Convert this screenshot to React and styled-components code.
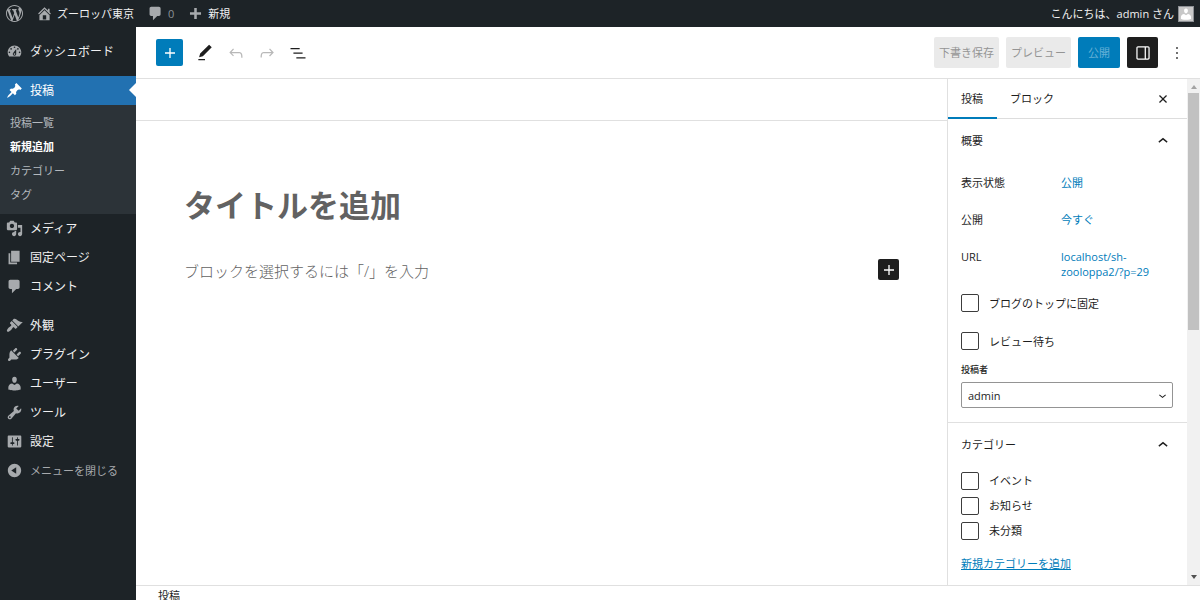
import React from "react";
import styled, { createGlobalStyle } from "styled-components";

const GlobalStyle = createGlobalStyle`
  * {
    box-sizing: border-box;
  }

  body {
    margin: 0;
    font-family: "Open Sans", "Noto Sans CJK JP", sans-serif;
    font-size: 11px;
    line-height: 15px;
    color: #1e1e1e;
    background: #fff;
  }

  button, input, select {
    font: inherit;
    color: inherit;
    margin: 0;
  }

  button {
    border: 0;
    padding: 0;
    background: none;
    cursor: pointer;
  }

  a {
    text-decoration: none;
  }
`;

// 20x20 admin glyphs
const adminIcons = {
  wordpress: "M20 10c0-5.51-4.49-10-10-10C4.48 0 0 4.49 0 10c0 5.52 4.48 10 10 10 5.51 0 10-4.48 10-10zM7.78 15.37L4.37 6.22c.55-.02 1.17-.08 1.17-.08.5-.06.44-1.13-.06-1.11 0 0-1.45.11-2.37.11-.18 0-.37 0-.58-.01C4.12 2.69 6.87 1.11 10 1.11c2.33 0 4.45.87 6.05 2.34-.68-.11-1.65.39-1.65 1.58 0 .74.45 1.36.9 2.1.35.61.55 1.36.55 2.46 0 1.49-1.4 5-1.4 5l-3.03-8.37c.54-.02.82-.17.82-.17.5-.05.44-1.25-.06-1.22 0 0-1.44.12-2.38.12-.87 0-2.33-.12-2.33-.12-.5-.03-.56 1.2-.06 1.22l.92.08 1.26 3.41zM17.41 10c.24-.64.74-1.87.43-4.25.7 1.29 1.05 2.71 1.05 4.25 0 3.29-1.73 6.24-4.4 7.78.97-2.59 1.94-5.2 2.92-7.78zM6.1 18.09C3.12 16.65 1.11 13.53 1.11 10c0-1.3.23-2.48.72-3.59C3.25 10.3 4.67 14.2 6.1 18.09zm4.03-6.63l2.58 6.98c-.86.29-1.76.45-2.71.45-.79 0-1.57-.11-2.29-.33.81-2.38 1.62-4.74 2.42-7.1z",
  home: "M16 8.5l1.53 1.53-1.06 1.06L10 4.6l-6.47 6.49-1.06-1.06L10 2.5l4 4v-2h2v4zm-6-2.46l6 5.99V18H4v-5.97zM12 17v-5H8v5h4z",
  comments: "M5 2h9c1.1 0 2 .9 2 2v7c0 1.1-.9 2-2 2h-2l-5 5v-5H5c-1.1 0-2-.9-2-2V4c0-1.1.9-2 2-2z",
  plus: "M16.5 8.5v3h-5v5h-3v-5h-5v-3h5v-5h3v5z",
  dashboard: "M3.76 16h12.48c1.1-1.37 1.76-3.11 1.76-5 0-4.42-3.58-8-8-8s-8 3.58-8 8c0 1.89.66 3.63 1.76 5zM10 4c.55 0 1 .45 1 1s-.45 1-1 1-1-.45-1-1 .45-1 1-1zM6 6c.55 0 1 .45 1 1s-.45 1-1 1-1-.45-1-1 .45-1 1-1zm8 0c.55 0 1 .45 1 1s-.45 1-1 1-1-.45-1-1 .45-1 1-1zm-5.37 5.55L12 7v6c0 1.1-.9 2-2 2s-2-.9-2-2c0-.57.24-1.08.63-1.45zM4 10c.55 0 1 .45 1 1s-.45 1-1 1-1-.45-1-1 .45-1 1-1zm12 0c.55 0 1 .45 1 1s-.45 1-1 1-1-.45-1-1 .45-1 1-1zm-5 3c0-.55-.45-1-1-1s-1 .45-1 1 .45 1 1 1 1-.45 1-1z",
  post: "M10.44 3.02l1.82-1.82 6.36 6.35-1.83 1.82c-1.05-.68-2.48-.57-3.41.36l-.75.75c-.92.93-1.04 2.35-.35 3.41l-1.83 1.82-2.41-2.41-2.8 2.79c-.42.42-3.38 2.71-3.8 2.29s1.86-3.39 2.28-3.81l2.79-2.79L4.1 9.36l1.83-1.82c1.05.69 2.48.57 3.4-.36l.75-.75c.93-.92 1.05-2.35.36-3.41z",
  media: "M13 11V4c0-.55-.45-1-1-1h-1.67L9 1H5L3.67 3H2c-.55 0-1 .45-1 1v7c0 .55.45 1 1 1h10c.55 0 1-.45 1-1zM7 4.5c1.38 0 2.5 1.12 2.5 2.5S8.38 9.5 7 9.5 4.5 8.38 4.5 7 5.62 4.5 7 4.5zM14 6h5v10.5c0 1.38-1.12 2.5-2.5 2.5S14 17.88 14 16.5s1.12-2.5 2.5-2.5c.17 0 .34.02.5.05V9h-3V6zm-4 8.05V13h2v3.5c0 1.38-1.12 2.5-2.5 2.5S7 17.88 7 16.5 8.12 14 9.5 14c.17 0 .34.02.5.05z",
  page: "M6 15V2h10v13H6zm-1 1h8v2H3V5h2v11z",
  appearance: "M14.48 11.06L7.41 3.99l1.5-1.5c.5-.56 2.3-.47 3.51.32 1.21.8 1.43 1.28 2.91 2.1 1.18.64 2.45 1.26 4.45.85zm-.71.71L6.7 4.7 4.93 6.47c-.39.39-.39 1.02 0 1.41l1.06 1.06c.39.39.39 1.03 0 1.42-.6.6-1.43 1.11-2.21 1.69-.35.26-.7.53-1.01.84C1.43 14.23.4 16.08 1.4 17.07c.99 1 2.84-.03 4.18-1.36.31-.31.58-.66.85-1.02.57-.78 1.08-1.61 1.69-2.21.39-.39 1.02-.39 1.41 0l1.06 1.06c.39.39 1.02.39 1.41 0z",
  plugins: "M13.11 4.36L9.87 7.6 8 5.73l3.24-3.24c.35-.34 1.05-.2 1.56.32.52.51.66 1.21.31 1.55zm-8 1.77l.91-1.12 9.01 9.01-1.19.84c-.71.71-2.63 1.16-3.82 1.16H6.14L4.9 17.26c-.59.59-1.54.59-2.12 0-.59-.58-.59-1.53 0-2.12l1.24-1.24v-3.88c0-1.13.4-3.19 1.09-3.89zm7.26 3.97l3.24-3.24c.34-.35 1.04-.21 1.55.31.52.51.66 1.21.31 1.55l-3.24 3.25z",
  users: "M10 9.25c-2.27 0-2.73-3.44-2.73-3.44C7 4.02 7.82 2 9.97 2c2.16 0 2.98 2.02 2.71 3.81 0 0-.41 3.44-2.68 3.44zm0 2.57L12.72 10c2.39 0 4.52 2.33 4.52 4.53v2.49s-3.65 1.13-7.24 1.13c-3.65 0-7.24-1.13-7.24-1.13v-2.49c0-2.25 1.94-4.48 4.47-4.48z",
  tools: "M16.68 9.77c-1.34 1.34-3.3 1.67-4.95.99l-5.41 6.52c-.99.99-2.59.99-3.58 0s-.99-2.59 0-3.57l6.52-5.42c-.68-1.65-.35-3.61.99-4.95 1.28-1.28 3.12-1.62 4.72-1.06l-2.89 2.89 2.82 2.82 2.86-2.87c.53 1.58.18 3.39-1.08 4.65zM3.81 16.21c.4.39 1.04.39 1.43 0 .4-.4.4-1.04 0-1.43-.39-.4-1.03-.4-1.43 0-.39.39-.39 1.03 0 1.43z",
  settings: "M18 16V4c0-.55-.45-1-1-1H3c-.55 0-1 .45-1 1v12c0 .55.45 1 1 1h14c.55 0 1-.45 1-1zM8 11h1c.55 0 1 .45 1 1s-.45 1-1 1H8v1.5c0 .28-.22.5-.5.5s-.5-.22-.5-.5V13H6c-.55 0-1-.45-1-1s.45-1 1-1h1V5.5c0-.28.22-.5.5-.5s.5.22.5.5V11zm5-2h-1c-.55 0-1-.45-1-1s.45-1 1-1h1V5.5c0-.28.22-.5.5-.5s.5.22.5.5V7h1c.55 0 1 .45 1 1s-.45 1-1 1h-1v5.5c0 .28-.22.5-.5.5s-.5-.22-.5-.5V9z",
  collapse: "M10 2.16c4.33 0 7.84 3.51 7.84 7.84s-3.51 7.84-7.84 7.84S2.16 14.33 2.16 10 5.71 2.16 10 2.16zm2 11.72V6.12L6.18 9.97z",
};

// 24x24 editor glyphs
const editorIcons = {
  plus: "M18 11.2h-5.2V6h-1.6v5.2H6v1.6h5.2V18h1.6v-5.2H18z",
  pencil: "M20.1 5.1L16.9 2 6.2 12.7l-1.3 4.4 4.5-1.3L20.1 5.1zM4 20.8h8v-1.5H4v1.5z",
  undo: "M18.3 11.7c-.6-.6-1.4-.9-2.3-.9H6.7l2.9-3.3-1.1-1-4.5 5L8.5 16l1-1-2.7-2.7H16c.5 0 .9.2 1.3.5 1 1 1 3.4 1 4.5v.3h1.5v-.2c0-1.5 0-4.3-1.5-5.7z",
  redo: "M15.6 6.5l-1.1 1 2.9 3.3H8c-.9 0-1.7.3-2.3.9-1.4 1.5-1.4 4.2-1.4 5.6v.2h1.5v-.3c0-1.1 0-3.5 1-4.5.3-.3.7-.5 1.3-.5h9.2L14.5 15l1.1 1.1 4.6-4.6-4.6-5z",
  listView: "M3 6h11v1.5H3V6zm3.5 5.5h11V13h-11v-1.5zM21 17H10v1.5h11V17z",
  drawer: "M18 4H6c-1.1 0-2 .9-2 2v12c0 1.1.9 2 2 2h12c1.1 0 2-.9 2-2V6c0-1.1-.9-2-2-2zm-4 14.5H6c-.3 0-.5-.2-.5-.5V6c0-.3.2-.5.5-.5h8v13zm4.5-.5c0 .3-.2.5-.5.5h-2.5v-13H18c.3 0 .5.2.5.5v12z",
  more: "M13 19h-2v-2h2v2zm0-6h-2v-2h2v2zm0-6h-2V5h2v2z",
  close: "M12 13.06l3.712 3.713 1.061-1.06L13.061 12l3.712-3.712-1.06-1.06L12 10.938 8.288 7.227l-1.061 1.06L10.939 12l-3.712 3.712 1.06 1.061L12 13.061z",
  chevronUp: "M6.5 12.6L12 8.2l5.5 4.4-1 1.4L12 10.4 7.5 14l-1-1.4z",
  chevronDown: "M17.5 11.6L12 16l-5.5-4.4 1-1.4L12 13.8l4.5-3.6 1 1.4z",
};

const Svg = styled.svg`
  display: block;
  flex: none;
  fill: currentColor;
`;

const AdminIcon = ({ name, size = 17 }) => (
  <Svg width={size} height={size} viewBox="0 0 20 20" aria-hidden="true">
    <path fillRule={name === "wordpress" ? "evenodd" : "nonzero"} d={adminIcons[name]} />
  </Svg>
);

const EditorIcon = ({ name, size = 20 }) => (
  <Svg width={size} height={size} viewBox="0 0 24 24" aria-hidden="true">
    <path d={editorIcons[name]} />
  </Svg>
);

const Shell = styled.div`
  display: flex;
  flex-direction: column;
  height: 100vh;
  overflow: hidden;
`;

const AdminBar = styled.header`
  display: flex;
  align-items: center;
  justify-content: space-between;
  flex: none;
  height: 27px;
  padding: 0 6px;
  background: #1d2327;
`;

const BarGroup = styled.nav`
  display: flex;
  align-items: center;
  gap: 13px;
`;

const BarLink = styled.a`
  display: flex;
  align-items: center;
  gap: 4px;
  color: ${({ $muted }) => ($muted ? "#8c9196" : "#f0f0f1")};

  svg {
    color: #a7aaad;
  }
`;

const Avatar = styled.span`
  width: 16px;
  height: 16px;
  border: 1px solid #8c8f94;
  background: #c8c8c8;

  svg {
    color: #fff;
  }
`;

const Body = styled.div`
  display: flex;
  flex: 1;
  min-height: 0;
`;

const AdminMenu = styled.nav`
  flex: none;
  width: 136px;
  padding-top: 10px;
  background: #1d2327;
`;

const MenuLink = styled.a`
  position: relative;
  display: flex;
  align-items: center;
  gap: 7px;
  height: 29px;
  padding-left: 6px;
  margin-top: ${({ $spaced }) => ($spaced ? "10px" : "0")};
  font-size: 12px;
  color: ${({ $active }) => ($active ? "#fff" : "#f0f0f1")};
  background: ${({ $active }) => ($active ? "#2271b1" : "transparent")};

  svg {
    color: ${({ $active }) => ($active ? "#fff" : "#a7aaad")};
  }

  &::after {
    content: "";
    display: ${({ $active }) => ($active ? "block" : "none")};
    position: absolute;
    right: 0;
    top: 7px;
    border: 7px solid transparent;
    border-left: 0;
    border-right-color: #fff;
  }
`;

const SubMenu = styled.div`
  padding: 5px 0 8px;
  background: #2c3338;
`;

const SubLink = styled.a`
  display: flex;
  align-items: center;
  height: 24px;
  padding-left: 10px;
  font-weight: ${({ $current }) => ($current ? 700 : 400)};
  color: ${({ $current }) => ($current ? "#fff" : "#b4b9be")};
`;

const CollapseButton = styled.button`
  display: flex;
  align-items: center;
  gap: 7px;
  width: 100%;
  height: 29px;
  padding-left: 6px;
  color: #a7aaad;
`;

const Editor = styled.div`
  display: flex;
  flex-direction: column;
  flex: 1;
  min-width: 0;
`;

const Toolbar = styled.div`
  display: flex;
  align-items: center;
  justify-content: space-between;
  flex: none;
  height: 52px;
  padding: 0 11px 0 20px;
  border-bottom: 1px solid #e0e0e0;
`;

const Tools = styled.div`
  display: flex;
  align-items: center;
  gap: ${({ $gap }) => $gap};
`;

const IconButton = styled.button`
  display: flex;
  align-items: center;
  justify-content: center;
  width: 30px;
  height: 30px;
  border-radius: 2px;
  color: #1e1e1e;

  &:disabled {
    color: #b8b8b8;
  }
`;

const InserterButton = styled(IconButton)`
  width: 27px;
  height: 27px;
  margin-right: 6px;
  color: #fff;
  background: #007cba;
`;

const DrawerButton = styled(IconButton)`
  width: 31px;
  height: 31px;
  color: #fff;
  background: #1e1e1e;
`;

const MoreButton = styled(IconButton)`
  width: 24px;
`;

const TextButton = styled.button`
  height: 31px;
  padding: 0 ${({ $primary }) => ($primary ? "10px" : "5px")};
  border-radius: 2px;
  color: ${({ $primary }) => ($primary ? "#66b0d6" : "#949494")};
  background: ${({ $primary }) => ($primary ? "#007cba" : "#eaeaea")};
`;

const Workspace = styled.div`
  display: flex;
  flex: 1;
  min-height: 0;
`;

const Canvas = styled.main`
  flex: 1;
  min-width: 0;
`;

const MetaStrip = styled.div`
  height: 42px;
  border-bottom: 1px solid #e0e0e0;
`;

const Writing = styled.div`
  display: flex;
  flex-direction: column;
  gap: 30px;
  padding: 60px 48px;
`;

const TitleInput = styled.input`
  width: 100%;
  height: 48px;
  padding: 0;
  border: 0;
  outline: 0;
  font-size: 31px;
  font-weight: 700;

  &::placeholder {
    color: #626262;
    opacity: 1;
  }
`;

const BlockRow = styled.div`
  display: flex;
  align-items: flex-start;
`;

const BlockInput = styled.input`
  flex: 1;
  min-width: 0;
  height: 24px;
  padding: 0;
  border: 0;
  outline: 0;
  font-size: 15px;
  font-weight: 300;

  &::placeholder {
    color: #626262;
    opacity: 1;
  }
`;

const AddBlock = styled.button`
  display: flex;
  align-items: center;
  justify-content: center;
  width: 21px;
  height: 21px;
  border-radius: 2px;
  color: #fff;
  background: #1e1e1e;
`;

const Settings = styled.aside`
  display: flex;
  flex: none;
  width: 253px;
  border-left: 1px solid #e0e0e0;
`;

const Panels = styled.div`
  flex: 1;
  min-width: 0;
  overflow: hidden;
`;

const Tabs = styled.div`
  display: flex;
  height: 40px;
  padding-right: 14px;
  border-bottom: 1px solid #ddd;
`;

const Tab = styled.button`
  height: 40px;
  padding: 0 14px 0 13px;
  border-bottom: 2px solid ${({ $active }) => ($active ? "#007cba" : "transparent")};
`;

const CloseButton = styled.button`
  margin-left: auto;
`;

const Panel = styled.section`
  padding: 0 14px 14px 13px;
  border-bottom: 1px solid #e0e0e0;
`;

const PanelHeading = styled.h2`
  margin: 0;
  font-size: 11px;
  font-weight: 400;
`;

const PanelToggle = styled.button`
  display: flex;
  align-items: center;
  justify-content: space-between;
  width: 100%;
  height: 43px;
`;

const Field = styled.div`
  display: flex;
  min-height: 37px;
  padding-top: 13px;

  span {
    width: 100px;
  }

  a {
    flex: 1;
    min-width: 0;
    color: #007cba;
  }
`;

const CheckList = styled.div`
  padding-top: ${({ $gap }) => $gap};
`;

const CheckLabel = styled.label`
  display: flex;
  align-items: center;
  gap: 10px;
  height: ${({ $tall }) => ($tall ? "38px" : "25px")};
`;

const Checkbox = styled.input.attrs({ type: "checkbox" })`
  appearance: none;
  width: 18px;
  height: 18px;
  border: 1px solid #3c3c3c;
  border-radius: 2px;
  background: #fff;
`;

const SelectLabel = styled.label`
  display: block;
  margin: 2px 0 5px;
  font-size: 9px;
  font-weight: 500;
`;

const SelectWrap = styled.div`
  position: relative;

  svg {
    position: absolute;
    right: 3px;
    top: 6px;
    pointer-events: none;
  }
`;

const Select = styled.select`
  appearance: none;
  display: block;
  width: 100%;
  height: 26px;
  padding: 0 6px;
  border: 1px solid #949494;
  border-radius: 2px;
  background: #fff;
`;

const AddCategory = styled.a`
  display: inline-block;
  margin: 13px 0 14px;
  color: #007cba;
  text-decoration: underline;
`;

const Scrollbar = styled.div`
  display: flex;
  flex-direction: column;
  align-items: center;
  flex: none;
  width: 13px;
  padding: 6px 0;
  background: #f1f1f1;
`;

const Thumb = styled.div`
  width: 11px;
  height: 48%;
  margin: 4px 0 auto;
  background: #c1c1c1;
`;

const Arrow = styled.div`
  border: 3px solid transparent;
  border-top: ${({ $down }) => ($down ? "4px solid #505050" : "0")};
  border-bottom: ${({ $down }) => ($down ? "0" : "4px solid #a3a3a3")};
`;

const Footer = styled.footer`
  flex: none;
  height: 15px;
  padding: 2px 22px;
  border-top: 1px solid #e0e0e0;
`;

const subItems = ["投稿一覧", "新規追加", "カテゴリー", "タグ"];

const menuItems = [
  { icon: "media", label: "メディア" },
  { icon: "page", label: "固定ページ" },
  { icon: "comments", label: "コメント" },
  { icon: "appearance", label: "外観", spaced: true },
  { icon: "plugins", label: "プラグイン" },
  { icon: "users", label: "ユーザー" },
  { icon: "tools", label: "ツール" },
  { icon: "settings", label: "設定" },
];

const categories = ["イベント", "お知らせ", "未分類"];

const TopBar = () => (
  <AdminBar>
    <BarGroup>
      <BarLink href="#" aria-label="WordPress">
        <AdminIcon name="wordpress" />
      </BarLink>
      <BarLink href="#">
        <AdminIcon name="home" />
        ズーロッパ東京
      </BarLink>
      <BarLink href="#" $muted>
        <AdminIcon name="comments" />0
      </BarLink>
      <BarLink href="#">
        <AdminIcon name="plus" />
        新規
      </BarLink>
    </BarGroup>
    <BarLink href="#">
      こんにちは、admin さん
      <Avatar>
        <AdminIcon name="users" size={14} />
      </Avatar>
    </BarLink>
  </AdminBar>
);

const SideMenu = () => (
  <AdminMenu>
    <MenuLink href="#">
      <AdminIcon name="dashboard" />
      ダッシュボード
    </MenuLink>
    <MenuLink href="#" $active $spaced>
      <AdminIcon name="post" />
      投稿
    </MenuLink>
    <SubMenu>
      {subItems.map((item) => (
        <SubLink key={item} href="#" $current={item === "新規追加"}>
          {item}
        </SubLink>
      ))}
    </SubMenu>
    {menuItems.map(({ icon, label, spaced }) => (
      <MenuLink key={label} href="#" $spaced={spaced}>
        <AdminIcon name={icon} />
        {label}
      </MenuLink>
    ))}
    <CollapseButton>
      <AdminIcon name="collapse" />
      メニューを閉じる
    </CollapseButton>
  </AdminMenu>
);

const EditorToolbar = () => (
  <Toolbar>
    <Tools $gap="1px">
      <InserterButton aria-label="ブロック挿入">
        <EditorIcon name="plus" />
      </InserterButton>
      <IconButton aria-label="ツール">
        <EditorIcon name="pencil" />
      </IconButton>
      <IconButton aria-label="元に戻す" disabled>
        <EditorIcon name="undo" />
      </IconButton>
      <IconButton aria-label="やり直す" disabled>
        <EditorIcon name="redo" />
      </IconButton>
      <IconButton aria-label="リスト表示">
        <EditorIcon name="listView" />
      </IconButton>
    </Tools>
    <Tools $gap="7px">
      <TextButton>下書き保存</TextButton>
      <TextButton>プレビュー</TextButton>
      <TextButton $primary>公開</TextButton>
      <DrawerButton aria-label="設定">
        <EditorIcon name="drawer" />
      </DrawerButton>
      <MoreButton aria-label="オプション">
        <EditorIcon name="more" />
      </MoreButton>
    </Tools>
  </Toolbar>
);

const PanelTitle = ({ children }) => (
  <PanelHeading>
    <PanelToggle>
      {children}
      <EditorIcon name="chevronUp" />
    </PanelToggle>
  </PanelHeading>
);

const SettingsSidebar = () => (
  <Settings>
    <Panels>
      <Tabs>
        <Tab $active>投稿</Tab>
        <Tab>ブロック</Tab>
        <CloseButton aria-label="設定を閉じる">
          <EditorIcon name="close" />
        </CloseButton>
      </Tabs>
      <Panel>
        <PanelTitle>概要</PanelTitle>
        <Field>
          <span>表示状態</span>
          <a href="#">公開</a>
        </Field>
        <Field>
          <span>公開</span>
          <a href="#">今すぐ</a>
        </Field>
        <Field>
          <span>URL</span>
          <a href="#">localhost/sh-zooloppa2/?p=29</a>
        </Field>
        <CheckList $gap="5px">
          <CheckLabel $tall>
            <Checkbox />
            ブログのトップに固定
          </CheckLabel>
          <CheckLabel $tall>
            <Checkbox />
            レビュー待ち
          </CheckLabel>
        </CheckList>
        <SelectLabel htmlFor="author">投稿者</SelectLabel>
        <SelectWrap>
          <Select id="author" defaultValue="admin">
            <option value="admin">admin</option>
          </Select>
          <EditorIcon name="chevronDown" size={15} />
        </SelectWrap>
      </Panel>
      <Panel>
        <PanelTitle>カテゴリー</PanelTitle>
        <CheckList $gap="2px">
          {categories.map((name) => (
            <CheckLabel key={name}>
              <Checkbox />
              {name}
            </CheckLabel>
          ))}
        </CheckList>
        <AddCategory href="#">新規カテゴリーを追加</AddCategory>
      </Panel>
    </Panels>
    <Scrollbar>
      <Arrow />
      <Thumb />
      <Arrow $down />
    </Scrollbar>
  </Settings>
);

const App = () => {
  return (
    <>
      <GlobalStyle />
      <Shell>
        <TopBar />
        <Body>
          <SideMenu />
          <Editor>
            <EditorToolbar />
            <Workspace>
              <Canvas>
                <MetaStrip />
                <Writing>
                  <TitleInput aria-label="タイトルを追加" placeholder="タイトルを追加" />
                  <BlockRow>
                    <BlockInput
                      aria-label="ブロック"
                      placeholder="ブロックを選択するには「/」を入力"
                    />
                    <AddBlock aria-label="ブロックを追加">
                      <EditorIcon name="plus" />
                    </AddBlock>
                  </BlockRow>
                </Writing>
              </Canvas>
              <SettingsSidebar />
            </Workspace>
            <Footer>投稿</Footer>
          </Editor>
        </Body>
      </Shell>
    </>
  );
};

export default App;
